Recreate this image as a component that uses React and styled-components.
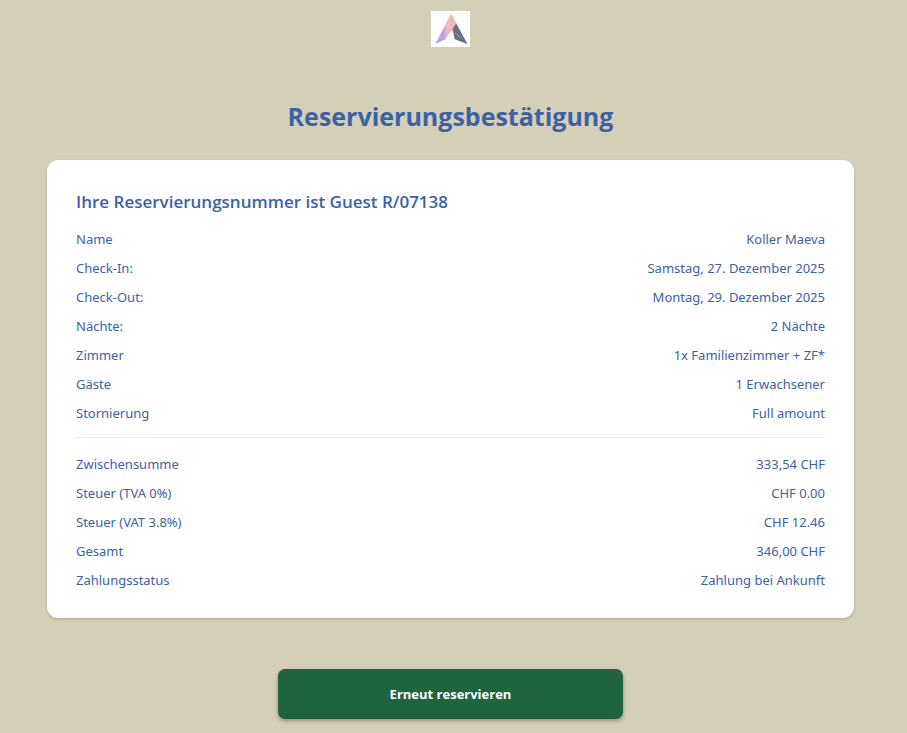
import React from 'react';
import styled, { createGlobalStyle } from 'styled-components';

const GlobalStyle = createGlobalStyle`
  * {
    box-sizing: border-box;
  }

  body {
    margin: 0;
    background: #d4cfb6;
    color: #3c62a5;
    font-family: "Segoe UI", "Open Sans", "Noto Sans", sans-serif;
    font-size: 13px;
    line-height: 20px;
  }
`;

const Page = styled.main`
  display: flex;
  flex-direction: column;
  align-items: center;
  padding: 11px 53px 14px 47px;
`;

const Logo = styled.svg`
  display: block;
  width: 39px;
  height: 36px;
  background: #fff;
`;

const PageTitle = styled.h1`
  margin: 51px 0 25px;
  font-size: 25px;
  line-height: 37px;
  font-weight: 700;
`;

const Card = styled.section`
  width: 100%;
  padding: 29px 29px 28px;
  background: #fff;
  border-radius: 11px;
  box-shadow: 0 1px 3px rgba(0, 0, 0, 0.2);
`;

const CardTitle = styled.h2`
  margin: 0 0 15px;
  font-size: 17px;
  line-height: 25px;
  font-weight: 600;
`;

const Details = styled.dl`
  display: flex;
  flex-direction: column;
  gap: 9px;
  margin: 0;
  padding-bottom: ${(props) => (props.$divided ? '14px' : '0')};
  border-bottom: ${(props) => (props.$divided ? '1px solid #e5e7eb' : 'none')};
  font-family: "Segoe UI", "Noto Sans", sans-serif;

  & + & {
    padding-top: 16px;
  }
`;

const Row = styled.div`
  display: flex;
  justify-content: space-between;
  gap: 16px;
`;

const Label = styled.dt`
  margin: 0;
`;

const Value = styled.dd`
  margin: 0;
  text-align: right;
`;

const ReserveButton = styled.button`
  width: 345px;
  max-width: 100%;
  height: 50px;
  margin-top: 51px;
  border: 0;
  border-radius: 7px;
  background: #1f643f;
  box-shadow: 0 2px 4px rgba(0, 0, 0, 0.3);
  color: #fff;
  font-family: inherit;
  font-size: 13px;
  line-height: 20px;
  font-weight: 700;
  cursor: pointer;
`;

const stay = [
  ['Name', 'Koller Maeva'],
  ['Check-In:', 'Samstag, 27. Dezember 2025'],
  ['Check-Out:', 'Montag, 29. Dezember 2025'],
  ['Nächte:', '2 Nächte'],
  ['Zimmer', '1x Familienzimmer + ZF*'],
  ['Gäste', '1 Erwachsener'],
  ['Stornierung', 'Full amount'],
];

const payment = [
  ['Zwischensumme', '333,54 CHF'],
  ['Steuer (TVA 0%)', 'CHF 0.00'],
  ['Steuer (VAT 3.8%)', 'CHF 12.46'],
  ['Gesamt', '346,00 CHF'],
  ['Zahlungsstatus', 'Zahlung bei Ankunft'],
];

const DetailList = ({ items, divided }) => (
  <Details $divided={divided}>
    {items.map(([label, value]) => (
      <Row key={label}>
        <Label>{label}</Label>
        <Value>{value}</Value>
      </Row>
    ))}
  </Details>
);

const HotelLogo = () => (
  <Logo viewBox="0 0 39 36" role="img" aria-label="Logo">
    <path d="M20.3 2.3 L25.6 13 L22 18.5 L22 21.3 L19.8 20 L17.5 24 L14.3 28.3 L14 18 L12.5 17.3 Z" fill="#ecb9b9" />
    <path d="M11 20 L12.7 16.8 L14.4 17.3 L14.6 28.3 L11 29.8 Z" fill="#c3a0ec" />
    <path d="M4.3 33 L11.2 19.5 L11.2 29.8 Z" fill="#aaaedb" />
    <path d="M25.2 12.3 L36.5 33 L23.7 28.3 L22.3 21.3 L21.8 17.8 Z" fill="#686d88" />
    <path d="M15.5 14 L20 16.5 M24 22 L31 27" stroke="#fff" strokeOpacity="0.3" fill="none" />
  </Logo>
);

export default function App() {
  return (
    <>
      <GlobalStyle />
      <Page>
        <HotelLogo />
        <PageTitle>Reservierungsbestätigung</PageTitle>
        <Card>
          <CardTitle>Ihre Reservierungsnummer ist Guest R/07138</CardTitle>
          <DetailList items={stay} divided />
          <DetailList items={payment} />
        </Card>
        <ReserveButton type="button">Erneut reservieren</ReserveButton>
      </Page>
    </>
  );
}
